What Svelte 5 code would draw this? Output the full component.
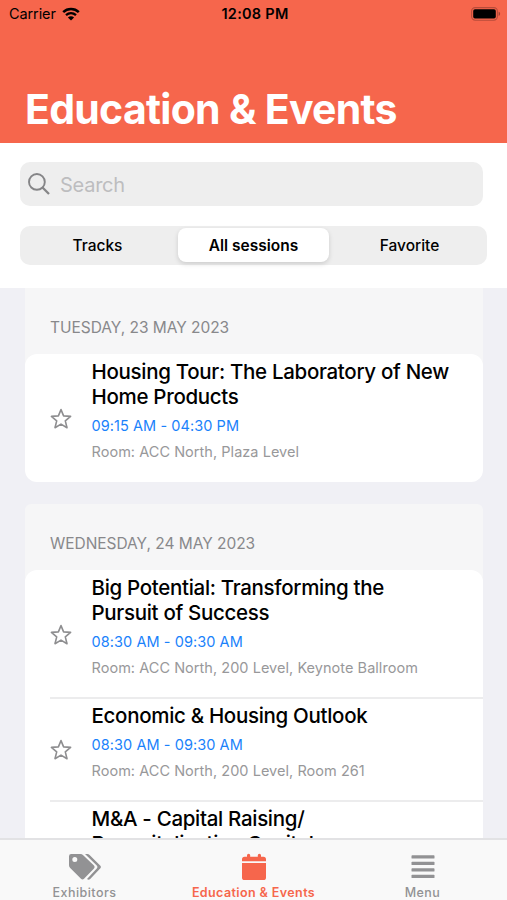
<script>
  let query = '';
  let filter = 'All sessions';
  let activeTab = 'events';
  let favorites = [];

  const filters = ['Tracks', 'All sessions', 'Favorite'];

  const tabs = [
    { id: 'exhibitors', label: 'Exhibitors' },
    { id: 'events', label: 'Education & Events' },
    { id: 'menu', label: 'Menu' }
  ];

  const days = [
    {
      date: 'Tuesday, 23 May 2023',
      sessions: [
        {
          id: 1,
          title: ['Housing Tour: The Laboratory of New', 'Home Products'],
          time: '09:15 AM - 04:30 PM',
          room: 'ACC North, Plaza Level'
        }
      ]
    },
    {
      date: 'Wednesday, 24 May 2023',
      sessions: [
        {
          id: 2,
          title: ['Big Potential: Transforming the', 'Pursuit of Success'],
          time: '08:30 AM - 09:30 AM',
          room: 'ACC North, 200 Level, Keynote Ballroom'
        },
        {
          id: 3,
          title: ['Economic & Housing Outlook'],
          time: '08:30 AM - 09:30 AM',
          room: 'ACC North, 200 Level, Room 261'
        },
        {
          id: 4,
          title: ['M&A - Capital Raising/', 'Recapitalization Capital'],
          time: '',
          room: ''
        }
      ]
    }
  ];

  function toggleFavorite(id) {
    favorites = favorites.includes(id) ? favorites.filter((f) => f !== id) : [...favorites, id];
  }
</script>

<div class="screen">
  <header>
    <div class="status-bar">
      <div class="carrier">
        <span>Carrier</span>
        <svg width="18" height="14" viewBox="0 0 18 14" fill="none">
          <path d="M1.2 5.1C5.6 .9 12.4 .9 16.8 5.1" stroke="#000" stroke-width="2.5"/>
          <path d="M4 8.2C6.9 5.6 11.1 5.6 14 8.2" stroke="#000" stroke-width="2.3"/>
          <path d="M5.9 10.4C7.6 8.9 10.4 8.9 12.1 10.4L9 13.5Z" fill="#000"/>
        </svg>
      </div>
      <span class="clock">12:08 PM</span>
      <svg class="battery" width="30" height="14" viewBox="0 0 30 14">
        <rect x=".6" y=".6" width="25.8" height="12.6" rx="3.6" fill="none" stroke="#b84c3a" stroke-width="1.1"/>
        <rect x="2.2" y="2.2" width="22.6" height="9.4" rx="1.8" fill="#000"/>
        <path d="M27.6 4.8C29.6 5.4 29.6 8.4 27.6 9Z" fill="#a04234"/>
      </svg>
    </div>
    <h1>Education &amp; Events</h1>
  </header>

  <div class="controls">
    <label class="search">
      <svg width="22" height="22" viewBox="0 0 22 22" fill="none" stroke="#858587" stroke-width="1.9">
        <circle cx="8.9" cy="8.9" r="7.9"/>
        <path d="M14.5 14.5L21 21" stroke-width="2.3"/>
      </svg>
      <input type="text" bind:value={query} placeholder="Search" />
    </label>
    <div class="segments">
      {#each filters as name}
        <button class:selected={filter === name} on:click={() => (filter = name)}>{name}</button>
      {/each}
    </div>
  </div>

  <main>
    {#each days as day}
      <section>
        <h2>{day.date}</h2>
        <div class="card">
          {#each day.sessions as session}
            <article class:tall={!session.time}>
              <button class="star" aria-label="Favorite" on:click={() => toggleFavorite(session.id)}>
                <svg width="22" height="22" viewBox="0 0 22 22" stroke="#8e8e90" stroke-width="1.6" stroke-linejoin="round"
                  fill={favorites.includes(session.id) ? '#8e8e90' : 'none'}>
                  <path d="M11 1.6L13.6 7.9L20.6 8.4L15.3 12.9L17 19.7L11 16.1L5 19.7L6.7 12.9L1.4 8.4L8.4 7.9Z"/>
                </svg>
              </button>
              <div class="info">
                <h3>
                  {#each session.title as line}<span>{line}</span>{/each}
                </h3>
                {#if session.time}
                  <p class="time">{session.time}</p>
                  <p class="room">Room: {session.room}</p>
                {/if}
              </div>
            </article>
          {/each}
        </div>
      </section>
    {/each}
  </main>

  <nav>
    {#each tabs as tab}
      <button class:active={activeTab === tab.id} on:click={() => (activeTab = tab.id)}>
        {#if tab.id === 'exhibitors'}
          <svg width="34" height="28" viewBox="0 0 34 28" fill="currentColor">
            <path fill-rule="evenodd" d="M1 3.2Q1 1 3.2 1H12.4Q14 1 15.2 2.2L26 12.6Q27.4 14 26 15.4L16 25.8Q14.5 27.2 13 25.8L2.2 15Q1 13.8 1 12.2ZM6.8 3.9A2.5 2.5 0 1 0 6.8 8.9A2.5 2.5 0 1 0 6.8 3.9Z"/>
            <path d="M17 1H19.4Q20.6 1 21.6 2L32.4 12.8Q33.6 14 32.4 15.2L22.2 25.9Q20.6 27.4 19 25.9L29 15.2Q30 14 29 12.8Z"/>
          </svg>
        {:else if tab.id === 'events'}
          <svg width="24" height="28" viewBox="0 0 24 28" fill="currentColor">
            <path d="M0 8.3V6.3Q0 3.8 2.5 3.8H5V2.2Q5 .7 6.6 .7T8.2 2.2V3.8H15.8V2.2Q15.8 .7 17.4 .7T19 2.2V3.8H21.5Q24 3.8 24 6.3V8.3Z"/>
            <path d="M0 10H24V24.4Q24 27 21.4 27H2.6Q0 27 0 24.4Z"/>
          </svg>
        {:else}
          <svg width="24" height="28" viewBox="0 0 24 28" fill="currentColor">
            <rect x=".5" y="2.2" width="23" height="3.4" rx=".7"/>
            <rect x=".5" y="8.7" width="23" height="3.4" rx=".7"/>
            <rect x=".5" y="15.2" width="23" height="3.4" rx=".7"/>
            <rect x=".5" y="21.7" width="23" height="3.4" rx=".7"/>
          </svg>
        {/if}
        <span>{tab.label}</span>
      </button>
    {/each}
  </nav>
</div>

<style>
  :global(body) {
    margin: 0;
  }
  .screen {
    height: 900px;
    display: flex;
    flex-direction: column;
    overflow: hidden;
    background: #f0f0f5;
    font-family: Inter, 'Liberation Sans', sans-serif;
    color: #000;
  }
  button {
    border: none;
    background: none;
    padding: 0;
    font: inherit;
    color: inherit;
    cursor: pointer;
  }
  h1, h2, h3, p {
    margin: 0;
  }
  header {
    flex: none;
    height: 143px;
    box-sizing: border-box;
    display: flex;
    flex-direction: column;
    justify-content: space-between;
    padding-bottom: 9px;
    background: #f6664c;
  }
  .status-bar {
    display: grid;
    grid-template-columns: 1fr auto 1fr;
    align-items: center;
    height: 27px;
    padding: 0 6px 0 9px;
    font-size: 14.5px;
  }
  .carrier {
    display: flex;
    align-items: center;
    gap: 6px;
    letter-spacing: -0.1px;
  }
  .clock {
    font-weight: 600;
    letter-spacing: 0.25px;
  }
  .battery {
    justify-self: end;
  }
  h1 {
    padding-left: 25px;
    font-size: 41px;
    line-height: 50px;
    font-weight: 700;
    letter-spacing: -0.72px;
    color: #fff;
    white-space: nowrap;
  }
  .controls {
    flex: none;
    height: 145px;
    box-sizing: border-box;
    padding: 19px 20px 0;
    background: #fff;
  }
  .search {
    display: flex;
    align-items: center;
    gap: 10px;
    height: 44px;
    margin-right: 4px;
    padding-left: 8px;
    box-sizing: border-box;
    border-radius: 10px;
    background: #eee;
  }
  input {
    flex: 1;
    border: none;
    padding: 1px 0 0;
    outline: none;
    background: none;
    font: inherit;
    font-size: 20px;
    letter-spacing: -0.25px;
  }
  input::placeholder {
    color: #bdbdbf;
    opacity: 1;
  }
  .segments {
    display: grid;
    grid-template-columns: 155px 1fr 155px;
    height: 39px;
    margin-top: 20px;
    border-radius: 10px;
    background: #eee;
    font-size: 15.5px;
    font-weight: 500;
    letter-spacing: -0.15px;
  }
  .segments button.selected {
    margin: 2px 3px 3px;
    border-radius: 8px;
    background: #fff;
    font-weight: 600;
    box-shadow: 0 2px 5px rgba(0, 0, 0, 0.14);
  }
  main {
    flex: 1;
    min-height: 0;
    overflow: hidden;
    padding: 0 24px 0 25px;
  }
  section {
    background: linear-gradient(#f6f6f7 80px, transparent 80px);
    border-radius: 6px;
    margin-bottom: 22px;
  }
  section:first-child {
    border-radius: 0;
  }
  h2 {
    height: 66px;
    box-sizing: border-box;
    padding: 30px 0 0 25px;
    font-size: 15.5px;
    line-height: 20px;
    font-weight: 400;
    letter-spacing: -0.04px;
    text-transform: uppercase;
    color: #88888b;
  }
  .card {
    border-radius: 12px;
    background: #fff;
  }
  article {
    position: relative;
    display: flex;
    align-items: center;
    padding: 5px 0 17px 25px;
  }
  article.tall {
    min-height: 106px;
  }
  .tall .info {
    align-self: flex-start;
  }
  article + article::before {
    content: '';
    position: absolute;
    top: -1px;
    left: 25px;
    right: 0;
    height: 2px;
    background: #ececed;
  }
  .star {
    width: 22px;
    height: 22px;
    margin: 13px 19.5px 0 0;
  }
  .star svg {
    display: block;
  }
  h3 {
    margin-bottom: 4px;
    font-size: 20.5px;
    line-height: 25px;
    font-weight: 500;
    letter-spacing: -0.31px;
  }
  h3 span {
    display: block;
    white-space: nowrap;
  }
  .time, .room {
    font-size: 14.5px;
    line-height: 26px;
    letter-spacing: 0.04px;
  }
  .time {
    letter-spacing: 0.07px;
    color: #1a82fb;
  }
  .room {
    color: #98989a;
  }
  nav {
    position: relative;
    flex: none;
    height: 62px;
    box-sizing: border-box;
    display: grid;
    grid-template-columns: repeat(3, 1fr);
    padding-top: 13px;
    border-top: 2px solid #e2e2e4;
    background: #f9f9f9;
  }
  nav button {
    display: flex;
    flex-direction: column;
    align-items: center;
    gap: 3px;
    color: #929294;
    font-size: 12.5px;
    line-height: 17px;
    font-weight: 500;
    letter-spacing: 0.45px;
    white-space: nowrap;
  }
  nav svg {
    flex: none;
  }
  nav button.active {
    color: #f6664c;
    font-weight: 600;
    letter-spacing: 0.4px;
  }
</style>
